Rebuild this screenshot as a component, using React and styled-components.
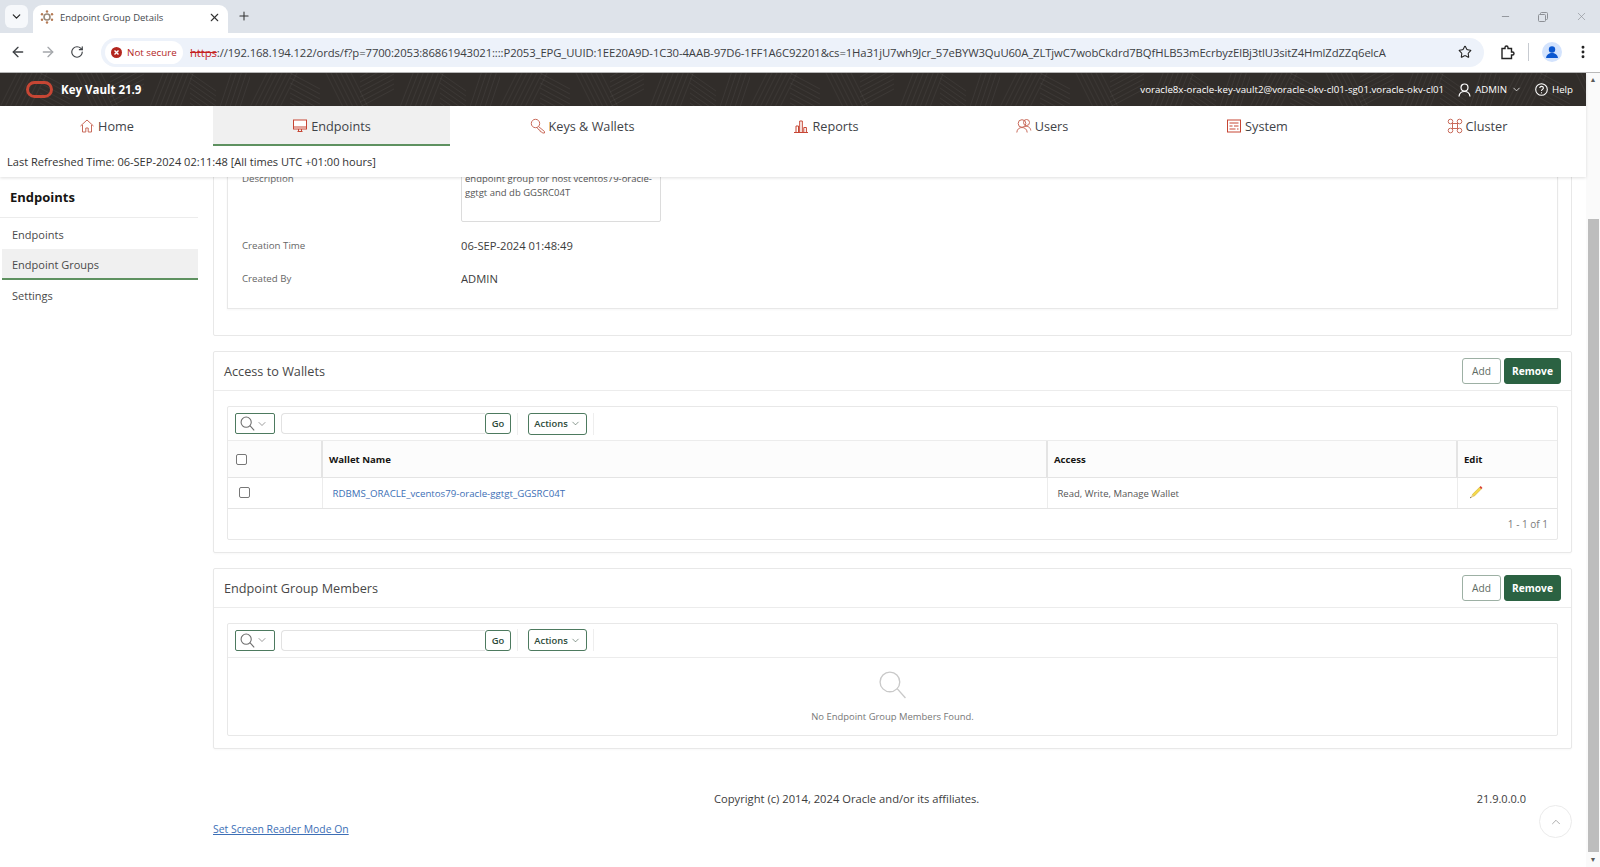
import styled, { createGlobalStyle } from 'styled-components';
import {
  ArrowLeft,
  ArrowRight,
  ChevronDown,
  ChevronUp,
  EllipsisVertical,
  Minus,
  Plus,
  RotateCw,
  Star,
  X,
} from 'lucide-react';

const hatch = (x, y, dx, dy, stepX, stepY, count) => {
  let d = '';
  for (let i = 0; i < count; i++) {
    const sx = x + stepX * i;
    const sy = y + stepY * i;
    d += `M${sx} ${sy}L${sx + dx} ${sy + dy}`;
  }
  return d;
};

// faint woven texture of the oracle header bar
const patternPath = [
  hatch(0, 34, 18, -36, 5, 0, 7),
  hatch(40, 0, 30, 16, 0, 5, 7),
  hatch(75, -2, 18, 36, 5, 0, 6),
  hatch(110, 34, 34, -18, 0, -5, 8),
  hatch(150, 34, 14, -36, 5, 0, 7),
  hatch(190, 0, 26, 18, 0, 5, 7),
  hatch(220, 34, 12, -36, 5, 0, 5),
].join('');
const patternSvg = `<svg xmlns="http://www.w3.org/2000/svg" width="250" height="33"><path d="${patternPath}" stroke="#fff" stroke-opacity=".05" fill="none"/></svg>`;
const patternUrl = `url("data:image/svg+xml,${encodeURIComponent(patternSvg)}")`;

const GlobalStyle = createGlobalStyle`
  * {
    box-sizing: border-box;
  }
  html,
  body {
    margin: 0;
    height: 867px;
    overflow: hidden;
    background: #fff;
    font-family: 'Open Sans', 'Noto Sans', sans-serif;
    color: #3a3a3a;
  }
`;

const TabStrip = styled.div`
  display: flex;
  align-items: flex-end;
  height: 33px;
  padding-left: 5px;
  background: #dee3ea;
  position: relative;
`;
const TabSearch = styled.div`
  width: 23px;
  height: 23px;
  margin: 0 5px 5px 0;
  border-radius: 6px;
  background: #f6f8fb;
  display: flex;
  align-items: center;
  justify-content: center;
  color: #222;
`;
const BrowserTab = styled.div`
  width: 195px;
  height: 28px;
  background: #fff;
  border-radius: 9px 9px 0 0;
  display: flex;
  align-items: center;
  padding: 0 7px 4px 7px;
  font-size: 9.5px;
  color: #45494e;
  svg:first-child {
    margin-right: 6px;
  }
  span {
    flex: 1;
  }
`;
const NewTab = styled.div`
  margin: 0 0 6px 5px;
  height: 22px;
  width: 22px;
  display: flex;
  align-items: center;
  justify-content: center;
  color: #333;
`;
const WindowControls = styled.div`
  margin-left: auto;
  display: flex;
  align-items: center;
  align-self: flex-start;
  gap: 27px;
  height: 33px;
  padding-right: 12px;
  color: #8d9096;
`;
const Toolbar = styled.div`
  display: flex;
  align-items: center;
  height: 40px;
  background: #fff;
  border-bottom: 1px solid #b9b9b9;
  padding: 0 0 1px 10px;
  border-radius: 8px 8px 0 0;
`;
const NavIcons = styled.div`
  display: flex;
  align-items: center;
  gap: 14px;
  width: 91px;
  color: #3f4246;
  & > svg:nth-child(2) {
    color: #a4a7ab;
  }
`;
const Omnibox = styled.div`
  width: 1383px;
  height: 29px;
  border-radius: 15px;
  background: #edf2fa;
  display: flex;
  align-items: center;
  padding: 0 12px 0 4px;
`;
const SecurityChip = styled.div`
  display: flex;
  align-items: center;
  gap: 5px;
  width: 78px;
  height: 23px;
  border-radius: 12px;
  background: #fff;
  padding-left: 6px;
  color: #b3261e;
  font-size: 9.8px;
  white-space: nowrap;
`;
const UrlText = styled.div`
  margin-left: 7px;
  flex: 1;
  white-space: nowrap;
  overflow: hidden;
  font-size: 11.3px;
  letter-spacing: -0.105px;
  color: #3c4043;
  s {
    color: #c5221f;
  }
`;
const ToolbarEnd = styled.div`
  display: flex;
  align-items: center;
  margin-left: 15px;
  color: #222;
  gap: 13px;
`;
const ToolDivider = styled.div`
  width: 1px;
  height: 18px;
  background: #c7cbd1;
`;

const Page = styled.div`
  position: relative;
  display: flex;
  height: 794px;
`;
const PageBody = styled.div`
  flex: 1;
  min-width: 0;
  display: flex;
  flex-direction: column;
`;
const StickyHead = styled.header`
  position: relative;
  z-index: 2;
  background: #fff;
  box-shadow: 0 1px 3px rgba(0, 0, 0, 0.13);
`;
const TopBar = styled.div`
  height: 33px;
  display: flex;
  align-items: center;
  padding: 0 13px 0 26px;
  background-color: #312d2a;
  background-image: ${patternUrl};
  color: #fff;
  font-size: 9.7px;
`;
const Brand = styled.div`
  display: flex;
  align-items: center;
  gap: 8px;
  font-size: 11.5px;
  font-weight: 700;
  margin-right: auto;
`;
const TopItem = styled.div`
  display: flex;
  align-items: center;
  gap: ${(p) => p.$gap || 4}px;
  margin-left: ${(p) => p.$left || 0}px;
  white-space: nowrap;
`;
const NavBar = styled.nav`
  display: grid;
  grid-template-columns: 213px 237px 264px 224px 208px 222px 218px;
  height: 40px;
`;
const NavTab = styled.a`
  display: flex;
  align-items: center;
  justify-content: center;
  gap: 3px;
  padding-top: 2px;
  font-size: 12.7px;
  color: #3f4348;
  background: ${(p) => (p.$active ? '#f0f0f0' : 'transparent')};
  border-bottom: 2px solid ${(p) => (p.$active ? '#5e9160' : 'transparent')};
`;
const RefreshRow = styled.div`
  height: 31px;
  padding: 0 0 0 7px;
  display: flex;
  align-items: center;
  font-size: 11.05px;
  color: #333;
`;

const Columns = styled.div`
  flex: 1;
  min-height: 0;
  display: flex;
  overflow: hidden;
`;
const Sidebar = styled.aside`
  width: 213px;
  flex: none;
  padding-right: 15px;
`;
const SideTitle = styled.h2`
  margin: 0 0 1px;
  height: 41px;
  padding: 0 0 0 10px;
  display: flex;
  align-items: center;
  font-size: 13px;
  font-weight: 700;
  color: #161513;
  border-bottom: 1px solid #ececec;
`;
const SideItem = styled.a`
  display: flex;
  align-items: center;
  height: ${(p) => (p.$active ? 31 : 30)}px;
  margin-left: 2px;
  padding: ${(p) => (p.$active ? '2px 0 0 10px' : '0 0 0 10px')};
  font-size: 11px;
  color: #4a4a4a;
  background: ${(p) => (p.$active ? '#f0f0f0' : 'transparent')};
  border-bottom: ${(p) => (p.$active ? '2px solid #5e9160' : '0')};
`;
const Main = styled.main`
  flex: 1;
  min-width: 0;
  padding-right: 14px;
  display: flex;
  flex-direction: column;
`;
const DetailPanel = styled.section`
  margin-top: -30px;
  padding: 0 13px 26px;
  border: 1px solid #e8e8e8;
  border-radius: 2px;
`;
const DetailBox = styled.div`
  padding: 16px 14px 13px;
  border: 1px solid #e8e8e8;
  border-top: 0;
  box-shadow: 0 1px 2px rgba(0, 0, 0, 0.04);
`;
const DetailRow = styled.div`
  display: flex;
  align-items: ${(p) => (p.$top ? 'flex-start' : 'center')};
  min-height: 33px;
  margin-bottom: ${(p) => (p.$top ? 7 : 0)}px;
`;
const DetailLabel = styled.div`
  width: 219px;
  flex: none;
  font-size: 9.7px;
  color: #666;
  padding-top: ${(p) => (p.$top ? 8 : 0)}px;
`;
const DetailValue = styled.div`
  font-size: 11.2px;
  color: #3c3c3c;
`;
const TextBox = styled.div`
  width: 200px;
  height: 58px;
  padding: 7px 3px 0;
  font-size: 9.5px;
  line-height: 14px;
  color: #555;
  border: 1px solid #dcdcdc;
  border-radius: 2px;
`;
const Panel = styled.section`
  margin-top: 15px;
  border: 1px solid #e8e8e8;
  border-radius: 2px;
  box-shadow: 0 1px 2px rgba(0, 0, 0, 0.03);
`;
const PanelHead = styled.div`
  display: flex;
  align-items: center;
  height: 39px;
  padding: 0 10px;
  border-bottom: 1px solid #ececec;
`;
const PanelTitle = styled.h3`
  margin: 0 auto 0 0;
  font-size: 12.7px;
  font-weight: 400;
  color: #474747;
`;
const HeadButton = styled.button`
  height: 26px;
  width: ${(p) => (p.$primary ? 57 : 39)}px;
  margin-left: ${(p) => (p.$primary ? 3 : 0)}px;
  padding: 0;
  font-family: inherit;
  font-size: 10.2px;
  font-weight: ${(p) => (p.$primary ? 700 : 400)};
  color: ${(p) => (p.$primary ? '#fff' : '#5d6b62')};
  background: ${(p) => (p.$primary ? '#2b6242' : '#fff')};
  border: 1px solid ${(p) => (p.$primary ? '#2b6242' : '#9db0a4')};
  border-radius: 3px;
`;
const PanelBody = styled.div`
  padding: 15px 13px 12px;
`;
const Region = styled.div`
  border: 1px solid #e8e8e8;
  border-radius: 2px;
`;
const ReportBar = styled.div`
  display: flex;
  align-items: center;
  height: 34px;
  padding: 0 0 0 7px;
  border-bottom: 1px solid #ececec;
`;
const SearchGroup = styled.div`
  display: flex;
  align-items: center;
  height: 22px;
  padding-right: 6px;
  border-right: 1px solid #eee;
`;
const ActionsGroup = styled(SearchGroup)`
  margin-left: 10px;
`;
const SearchToggle = styled.button`
  width: 40px;
  height: 21px;
  padding: 0 0 0 4px;
  display: flex;
  align-items: center;
  gap: 1px;
  border: 1px solid #4d7a5f;
  border-radius: 2px;
  background: #fff;
  color: #5b5b5b;
`;
const SearchInput = styled.input`
  width: 204px;
  height: 21px;
  margin-left: 6px;
  border: 1px solid #e2e2e2;
  border-right: 0;
  border-radius: 4px 0 0 4px;
  background: #fff;
`;
const SmallButton = styled.button`
  height: ${(p) => (p.$tall ? 22 : 21)}px;
  width: ${(p) => p.$width}px;
  padding: 0;
  display: flex;
  align-items: center;
  justify-content: center;
  gap: 2px;
  font-family: inherit;
  font-size: 9.4px;
  font-weight: 600;
  color: #2c4a39;
  background: #fff;
  border: 1px solid #4d7a5f;
  border-radius: 3px;
`;
const Report = styled.table`
  width: 100%;
  border-collapse: collapse;
  table-layout: fixed;
  th,
  td {
    padding: 0;
    border-bottom: 1px solid #e4e4e4;
    border-left: 1px solid #ececec;
    text-align: left;
  }
  th:first-child,
  td:first-child {
    width: 94px;
    border-left: 0;
  }
  th:nth-child(2) {
    width: 725px;
  }
  th:nth-child(3) {
    width: 410px;
  }
  th {
    height: 36px;
    padding: 2px 0 0 6px;
    background: #fcfcfc;
    font-size: 9.6px;
    font-weight: 700;
    color: #161513;
    border-left-width: 2px;
    border-left-color: #e4e4e4;
  }
  td {
    height: 31px;
    padding: 1px 0 0 10px;
    font-size: 9.5px;
    color: #555;
  }
  th:first-child {
    padding-left: 8px;
  }
  td:first-child {
    padding-left: 11px;
  }
  td:last-child {
    padding-left: 11px;
  }
`;
const Check = styled.span`
  display: block;
  width: 11px;
  height: 11px;
  border: 1px solid #777;
  border-radius: 2px;
  background: #fff;
  position: relative;
  top: ${(p) => (p.$raised ? -1 : 0)}px;
`;
const WalletLink = styled.a`
  color: #3d6fb6;
  font-size: 9.7px;
`;
const Pagination = styled.div`
  height: 30px;
  display: flex;
  align-items: center;
  justify-content: flex-end;
  padding-right: 9px;
  font-size: 10px;
  color: #7b7b7b;
`;
const EmptyState = styled.div`
  height: 77px;
  display: flex;
  flex-direction: column;
  align-items: center;
  padding-top: 12px;
  font-size: 9.45px;
  color: #777;
  p {
    margin: 11px 0 0;
  }
`;
const CopyRow = styled.div`
  display: flex;
  align-items: center;
  height: 16px;
  margin-top: 42px;
  padding: 0 46px 0 501px;
  font-size: 11.2px;
  color: #3c3c3c;
  span:last-child {
    margin-left: auto;
    font-size: 11px;
  }
`;
const ReaderLink = styled.a`
  display: block;
  margin-top: 14px;
  font-size: 10.4px;
  line-height: 16px;
  color: #3d6fb6;
  text-decoration: underline;
`;
const BackToTop = styled.div`
  position: absolute;
  right: 28px;
  bottom: 29px;
  width: 33px;
  height: 33px;
  border: 1px solid #ebebeb;
  border-radius: 50%;
  display: flex;
  align-items: center;
  justify-content: center;
  color: #8a8a8a;
  background: #fff;
`;
const Scrollbar = styled.div`
  position: relative;
  width: 14px;
  flex: none;
  background: #fafafa;
  display: flex;
  flex-direction: column;
  align-items: center;
  color: #5a5a5a;
  font-size: 7px;
  line-height: 14px;
`;
const ScrollThumb = styled.div`
  width: 11px;
  height: 634px;
  margin-top: 132px;
  margin-bottom: 1px;
  background: #bdbdbd;
`;

const Icon = styled.svg`
  flex: none;
`;

const IconLine = ({ size = 16, children, color = '#c96a5a', sw = 1 }) => (
  <Icon
    width={size}
    height={size}
    viewBox="0 0 16 16"
    fill="none"
    stroke={color}
    strokeWidth={sw}
  >
    {children}
  </Icon>
);

const HomeIcon = () => (
  <IconLine>
    <path d="M1.5 8 8 2l6.5 6M3.5 7v7h3.3v-4h2.4v4h3.3V7" />
  </IconLine>
);
const MonitorIcon = () => (
  <IconLine>
    <rect x="1.5" y="2" width="13" height="9" fill="#fff" stroke="#c74634" />
    <path d="M1.5 9h13M5.5 13.5h5M6.5 11v2.5M9.5 11v2.5" stroke="#c74634" />
  </IconLine>
);
const KeyIcon = () => (
  <IconLine>
    <circle cx="5.5" cy="5.5" r="4.2" />
    <path d="m8.5 8.5 6 5v1.5h-2l-1-1.2-1.2-.2-.2-1.2-1.2-.5-2-2.5" />
    <path d="M3.5 4.5h.1" />
  </IconLine>
);
const ChartIcon = () => (
  <IconLine color="#c74634">
    <path d="M1 14.5h14M3 14V8h2.5v6M6.7 14V3h2.6v11M10.8 14V9.5h2.6V14" />
  </IconLine>
);
const UsersIcon = () => (
  <IconLine>
    <circle cx="6" cy="5.5" r="3.8" />
    <circle cx="10.5" cy="4.5" r="3" />
    <path d="M.8 14.5C1 11 3.5 9.5 6 9.5s5 1.5 5.2 5M9 8.5c2.5-.7 5.3.5 5.8 4" />
  </IconLine>
);
const SystemIcon = () => (
  <IconLine color="#c74634">
    <rect x="1.5" y="2" width="13" height="12" />
    <path d="M3.5 5h9M3.5 8h3M8 8h4.5M3.5 11h6M11 11h1.5" />
  </IconLine>
);
const ClusterIcon = () => (
  <IconLine>
    <circle cx="3.5" cy="3.5" r="2.3" />
    <circle cx="12.5" cy="3.5" r="2.3" />
    <circle cx="3.5" cy="12.5" r="2.3" />
    <circle cx="12.5" cy="12.5" r="2.3" />
    <rect x="5.5" y="5.5" width="5" height="5" />
  </IconLine>
);
const Magnifier = ({ size, color = '#6e6e6e', sw = 2 }) => (
  <Icon width={size} height={size} viewBox="0 0 28 28" fill="none" stroke={color} strokeWidth={sw}>
    <circle cx="11.5" cy="11.5" r="9.5" />
    <path d="m18.5 18 8 9" />
  </Icon>
);
const PencilIcon = () => (
  <Icon width="14" height="14" viewBox="0 0 14 14">
    <path d="M3.2 9.6 10.5 2.3l1.8 1.8L5 11.4z" fill="#f5d94a" stroke="#c9a92a" strokeWidth=".5" />
    <path d="m3.2 9.6 1.8 1.8L1 13.3z" fill="#e9cf8b" />
    <path d="m1 13.3.6-1.5.9.9z" fill="#555" />
    <path d="m10.5 2.3 1.2-1.2 1.8 1.8-1.2 1.2z" fill="#d83a2e" />
  </Icon>
);
const FaviconIcon = () => (
  <Icon width="14" height="14" viewBox="0 0 14 14">
    <circle cx="7" cy="7" r="3" fill="none" stroke="#9a8a7a" strokeWidth="1.6" />
    <g fill="#b57a54">
      <circle cx="7" cy="1.5" r="1.2" />
      <circle cx="7" cy="12.5" r="1.2" />
      <circle cx="2" cy="4.2" r="1.2" />
      <circle cx="12" cy="4.2" r="1.2" />
      <circle cx="2" cy="9.8" r="1.2" />
      <circle cx="12" cy="9.8" r="1.2" />
    </g>
  </Icon>
);
const NotSecureIcon = () => (
  <Icon width="11" height="11" viewBox="0 0 11 11">
    <circle cx="5.5" cy="5.5" r="5.5" fill="#b3261e" />
    <path d="m3.5 3.5 4 4m0-4-4 4" stroke="#fff" strokeWidth="1.4" />
  </Icon>
);
const RestoreIcon = () => (
  <Icon width="10" height="10" viewBox="0 0 10 10" fill="none" stroke="currentColor">
    <rect x=".5" y="2.5" width="7" height="7" rx="1" />
    <path d="M2.5 2.5v-1a1 1 0 0 1 1-1h5a1 1 0 0 1 1 1v5a1 1 0 0 1-1 1h-1" />
  </Icon>
);
const ExtensionIcon = () => (
  <Icon width="16" height="16" viewBox="0 0 16 16" fill="none" stroke="#222" strokeWidth="1.4">
    <path d="M6 3.5a1.5 1.5 0 0 1 3 0v1h3.5V8h1a1.5 1.5 0 0 1 0 3h-1v3.5H3v-10h3z" />
  </Icon>
);
const AvatarIcon = () => (
  <Icon width="20" height="20" viewBox="0 0 20 20">
    <circle cx="10" cy="10" r="10" fill="#d3e3fd" />
    <circle cx="10" cy="7.5" r="3.2" fill="#0b57d0" />
    <path d="M4 16c.5-3.5 3-5 6-5s5.5 1.5 6 5z" fill="#0b57d0" />
  </Icon>
);
const OracleLogo = () => (
  <Icon width="27" height="17" viewBox="0 0 27 17" fill="none">
    <rect x="1.5" y="1.5" width="24" height="14" rx="7" stroke="#c74634" strokeWidth="3" />
  </Icon>
);
const UserGlyph = () => (
  <Icon width="13" height="14" viewBox="0 0 13 14" fill="none" stroke="#fff" strokeWidth="1.2">
    <circle cx="6.5" cy="4.5" r="3.5" />
    <path d="M1 13.5c.3-3 2.5-5 5.5-5s5.2 2 5.5 5" />
  </Icon>
);
const HelpGlyph = () => (
  <Icon width="13" height="13" viewBox="0 0 13 13" fill="none" stroke="#fff" strokeWidth="1.1">
    <circle cx="6.5" cy="6.5" r="5.8" />
    <path d="M4.7 5c.2-1.2 1-1.6 1.9-1.6 1 0 1.8.7 1.8 1.6 0 1.4-1.9 1.4-1.9 3" />
    <path d="M6.5 9.3v1" />
  </Icon>
);

const navItems = [
  { label: 'Home', icon: <HomeIcon /> },
  { label: 'Endpoints', icon: <MonitorIcon />, active: true },
  { label: 'Keys & Wallets', icon: <KeyIcon /> },
  { label: 'Reports', icon: <ChartIcon /> },
  { label: 'Users', icon: <UsersIcon /> },
  { label: 'System', icon: <SystemIcon /> },
  { label: 'Cluster', icon: <ClusterIcon /> },
];

const ReportToolbar = () => (
  <ReportBar>
    <SearchGroup>
      <SearchToggle>
        <Magnifier size={15} />
        <ChevronDown size={12} strokeWidth={1.2} />
      </SearchToggle>
      <SearchInput aria-label="Search" />
      <SmallButton $width={26}>Go</SmallButton>
    </SearchGroup>
    <ActionsGroup>
      <SmallButton $width={59} $tall>
        Actions
        <ChevronDown size={11} strokeWidth={1.2} />
      </SmallButton>
    </ActionsGroup>
  </ReportBar>
);

const PanelHeader = ({ title }) => (
  <PanelHead>
    <PanelTitle>{title}</PanelTitle>
    <HeadButton>Add</HeadButton>
    <HeadButton $primary>Remove</HeadButton>
  </PanelHead>
);

const App = () => {
  return (
    <>
      <GlobalStyle />
      <TabStrip>
        <TabSearch>
          <ChevronDown size={13} strokeWidth={2.2} />
        </TabSearch>
        <BrowserTab>
          <FaviconIcon />
          <span>Endpoint Group Details</span>
          <X size={13} color="#333" strokeWidth={2} />
        </BrowserTab>
        <NewTab>
          <Plus size={14} strokeWidth={1.8} />
        </NewTab>
        <WindowControls>
          <Minus size={11} />
          <RestoreIcon />
          <X size={13} strokeWidth={1.2} />
        </WindowControls>
      </TabStrip>
      <Toolbar>
        <NavIcons>
          <ArrowLeft size={16} strokeWidth={2} />
          <ArrowRight size={16} strokeWidth={2} />
          <RotateCw size={14} strokeWidth={2} />
        </NavIcons>
        <Omnibox>
          <SecurityChip>
            <NotSecureIcon />
            Not secure
          </SecurityChip>
          <UrlText>
            <s>https</s>
            ://192.168.194.122/ords/f?p=7700:2053:86861943021::::P2053_EPG_UUID:1EE20A9D-1C30-4AAB-97D6-1FF1A6C92201&cs=1Ha31jU7wh9Jcr_57eBYW3QuU60A_ZLTjwC7wobCkdrd7BQfHLB53mEcrbyzElBj3tlU3sitZ4HmlZdZZq6elcA
          </UrlText>
          <Star size={14} color="#222" strokeWidth={1.8} />
        </Omnibox>
        <ToolbarEnd>
          <ExtensionIcon />
          <ToolDivider />
          <AvatarIcon />
          <EllipsisVertical size={16} strokeWidth={2.4} />
        </ToolbarEnd>
      </Toolbar>
      <Page>
        <PageBody>
          <StickyHead>
            <TopBar>
              <Brand>
                <OracleLogo />
                Key Vault 21.9
              </Brand>
              <TopItem>voracle8x-oracle-key-vault2@voracle-okv-cl01-sg01.voracle-okv-cl01</TopItem>
              <TopItem $left={14}>
                <UserGlyph />
                ADMIN
                <ChevronDown size={11} strokeWidth={1.6} />
              </TopItem>
              <TopItem $left={13}>
                <HelpGlyph />
                Help
              </TopItem>
            </TopBar>
            <NavBar>
              {navItems.map((item) => (
                <NavTab key={item.label} $active={item.active}>
                  {item.icon}
                  {item.label}
                </NavTab>
              ))}
            </NavBar>
            <RefreshRow>Last Refreshed Time: 06-SEP-2024 02:11:48 [All times UTC +01:00 hours]</RefreshRow>
          </StickyHead>
          <Columns>
            <Sidebar>
              <SideTitle>Endpoints</SideTitle>
              <SideItem>Endpoints</SideItem>
              <SideItem $active>Endpoint Groups</SideItem>
              <SideItem>Settings</SideItem>
            </Sidebar>
            <Main>
              <DetailPanel>
                <DetailBox>
                  <DetailRow $top>
                    <DetailLabel $top>Description</DetailLabel>
                    <TextBox>endpoint group for host vcentos79-oracle-ggtgt and db GGSRC04T</TextBox>
                  </DetailRow>
                  <DetailRow>
                    <DetailLabel>Creation Time</DetailLabel>
                    <DetailValue>06-SEP-2024 01:48:49</DetailValue>
                  </DetailRow>
                  <DetailRow>
                    <DetailLabel>Created By</DetailLabel>
                    <DetailValue>ADMIN</DetailValue>
                  </DetailRow>
                </DetailBox>
              </DetailPanel>
              <Panel>
                <PanelHeader title="Access to Wallets" />
                <PanelBody>
                  <Region>
                    <ReportToolbar />
                    <Report>
                      <thead>
                        <tr>
                          <th>
                            <Check />
                          </th>
                          <th>Wallet Name</th>
                          <th>Access</th>
                          <th>Edit</th>
                        </tr>
                      </thead>
                      <tbody>
                        <tr>
                          <td>
                            <Check $raised />
                          </td>
                          <td>
                            <WalletLink>RDBMS_ORACLE_vcentos79-oracle-ggtgt_GGSRC04T</WalletLink>
                          </td>
                          <td>Read, Write, Manage Wallet</td>
                          <td>
                            <PencilIcon />
                          </td>
                        </tr>
                      </tbody>
                    </Report>
                    <Pagination>1 - 1 of 1</Pagination>
                  </Region>
                </PanelBody>
              </Panel>
              <Panel>
                <PanelHeader title="Endpoint Group Members" />
                <PanelBody>
                  <Region>
                    <ReportToolbar />
                    <EmptyState>
                      <Magnifier size={29} color="#c9c9c9" sw={1.3} />
                      <p>No Endpoint Group Members Found.</p>
                    </EmptyState>
                  </Region>
                </PanelBody>
              </Panel>
              <CopyRow>
                <span>Copyright (c) 2014, 2024 Oracle and/or its affiliates.</span>
                <span>21.9.0.0.0</span>
              </CopyRow>
              <ReaderLink>Set Screen Reader Mode On</ReaderLink>
            </Main>
          </Columns>
        </PageBody>
        <BackToTop>
          <ChevronUp size={14} strokeWidth={1.2} />
        </BackToTop>
        <Scrollbar>
          <span>▲</span>
          <ScrollThumb />
          <span>▼</span>
        </Scrollbar>
      </Page>
    </>
  );
};

export default App;
